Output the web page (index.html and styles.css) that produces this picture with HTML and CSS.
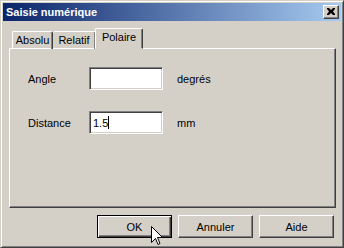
FILE: index.html
```html
<!DOCTYPE html>
<html>
<head>
<meta charset="utf-8">
<link rel="stylesheet" href="styles.css">
</head>
<body>
<div class="window">
  <div class="titlebar">
    <span class="title">Saisie numérique</span>
    <span class="close"><svg width="8" height="7" viewBox="0 0 8 7"><path d="M0 0h2l2 2 2-2h2v1L6 3.5 8 6v1H6L4 5 2 7H0V6l2-2.5L0 1z" fill="#000"/></svg></span>
  </div>
  <div class="content">
    <div class="tabs">
      <div class="tab t1">Absolu</div>
      <div class="tab t2">Relatif</div>
      <div class="tab active">Polaire</div>
    </div>
    <div class="panel">
      <div class="row">
        <span class="label">Angle</span>
        <span class="field"></span>
        <span class="unit">degrés</span>
      </div>
      <div class="row">
        <span class="label">Distance</span>
        <span class="field"><span class="val">1.5</span><span class="caret"></span></span>
        <span class="unit">mm</span>
      </div>
    </div>
    <div class="buttons">
      <div class="btn default">OK</div>
      <div class="btn">Annuler</div>
      <div class="btn">Aide</div>
    </div>
  </div>
  <svg class="cursor" width="12" height="20" viewBox="0 0 12 20"><path d="M0.5 0.5V16.5L4.5 12.5L7 18.5L9 17.5L6.5 11.5H11.5Z" fill="#fff" stroke="#000" stroke-width="1"/></svg>
</div>
</body>
</html>
```
FILE: styles.css
```css
html, body { margin: 0; padding: 0; }
body {
  width: 344px; height: 248px; overflow: hidden;
  font-family: "Liberation Sans", Arial, sans-serif;
  font-size: 11px; color: #000;
}
.window {
  position: relative;
  box-sizing: border-box;
  width: 344px; height: 248px;
  background: #d4d0c8;
  border-top: 1px solid #d4d0c8; border-left: 1px solid #d4d0c8;
  border-right: 1px solid #404040; border-bottom: 1px solid #404040;
  box-shadow: inset 1px 1px 0 #fff, inset -1px -1px 0 #808080;
  padding: 2px;
  display: flex; flex-direction: column;
}
.titlebar {
  height: 18px;
  background: linear-gradient(to right, #0a246a, #a6caf0);
  display: flex; align-items: center; justify-content: space-between;
  padding: 0 2px 0 3px;
}
.title { color: #fff; font-weight: bold; font-size: 11px; }
.close {
  box-sizing: border-box;
  width: 16px; height: 14px;
  background: #d4d0c8;
  border-top: 1px solid #fff; border-left: 1px solid #fff;
  border-right: 1px solid #404040; border-bottom: 1px solid #404040;
  box-shadow: inset -1px -1px 0 #808080;
  display: flex; align-items: center; justify-content: center;
  padding: 0 1px 1px 0;
}
.content { padding: 6px 6px 0 5px; display: flex; flex-direction: column; }
.tabs { display: flex; align-items: flex-end; height: 21px; padding-left: 4px; position: relative; z-index: 2; }
.tab {
  box-sizing: border-box;
  height: 18px; padding-top: 2px;
  text-align: center;
  border-top: 1px solid #fff; border-left: 1px solid #fff;
  border-right: 1px solid #404040;
  box-shadow: inset -1px 0 0 #808080;
  border-radius: 2px 2px 0 0;
  margin-bottom: -1px;
  white-space: nowrap;
}
.t1 { width: 41px; }
.t2 { width: 43px; border-left: none; }
.tab.active {
  width: 48px;
  height: 21px; margin: 0 0 -1px -1px; padding-top: 2px;
  background: #d4d0c8;
  border-bottom: 1px solid #d4d0c8;
}
.panel {
  box-sizing: border-box;
  width: 327px; height: 160px;
  margin-left: 1px;
  border-top: 1px solid #fff; border-left: 1px solid #fff;
  border-right: 1px solid #404040; border-bottom: 1px solid #404040;
  box-shadow: inset -1px -1px 0 #808080;
  padding: 18px 0 0 18px;
  display: flex; flex-direction: column; gap: 21px;
}
.row { display: flex; align-items: center; height: 23px; }
.label { width: 61px; }
.field {
  box-sizing: border-box;
  width: 74px; height: 23px; background: #fff;
  border-top: 1px solid #808080; border-left: 1px solid #808080;
  border-right: 1px solid #fff; border-bottom: 1px solid #fff;
  box-shadow: inset 1px 1px 0 #404040, inset -1px -1px 0 #d4d0c8;
  display: flex; align-items: center; padding-left: 3px;
}
.caret { width: 1px; height: 13px; background: #000; }
.unit { margin-left: 14px; }
.buttons { display: flex; gap: 6px; justify-content: flex-end; margin-top: 7px; padding-right: 1px; }
.btn {
  box-sizing: border-box;
  width: 75px; height: 23px;
  border-top: 1px solid #fff; border-left: 1px solid #fff;
  border-right: 1px solid #404040; border-bottom: 1px solid #404040;
  box-shadow: inset -1px -1px 0 #808080;
  display: flex; align-items: center; justify-content: center;
}
.btn.default {
  border: 1px solid #000;
  box-shadow: inset 1px 1px 0 #fff, inset -1px -1px 0 #404040, inset -2px -2px 0 #808080;
}
.cursor { position: absolute; left: 150px; top: 225px; }
```
